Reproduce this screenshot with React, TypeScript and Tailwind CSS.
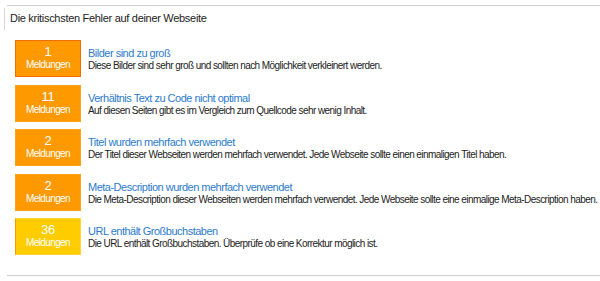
import React from 'react';

type Issue = {
  count: number;
  title: string;
  text: string;
  tone: 'hot' | 'orange' | 'yellow';
};

const issues: Issue[] = [
  { count: 1, title: 'Bilder sind zu groß', text: 'Diese Bilder sind sehr groß und sollten nach Möglichkeit verkleinert werden.', tone: 'hot' },
  { count: 11, title: 'Verhältnis Text zu Code nicht optimal', text: 'Auf diesen Seiten gibt es im Vergleich zum Quellcode sehr wenig Inhalt.', tone: 'orange' },
  { count: 2, title: 'Titel wurden mehrfach verwendet', text: 'Der Titel dieser Webseiten werden mehrfach verwendet. Jede Webseite sollte einen einmaligen Titel haben.', tone: 'orange' },
  { count: 2, title: 'Meta-Description wurden mehrfach verwendet', text: 'Die Meta-Description dieser Webseiten werden mehrfach verwendet. Jede Webseite sollte eine einmalige Meta-Description haben.', tone: 'orange' },
  { count: 36, title: 'URL enthält Großbuchstaben', text: 'Die URL enthält Großbuchstaben. Überprüfe ob eine Korrektur möglich ist.', tone: 'yellow' },
];

const toneClass = {
  hot: 'bg-[#ff9900] border border-[#f26c00]',
  orange: 'bg-[#ff9900] border border-[#ffa31a]',
  yellow: 'bg-[#ffcc00] border border-[#ffd633] border-l-[#ff9900]',
};

const App = () => {
  return (
    <div className="w-[600px] h-[281px] bg-white pt-[5px] font-['Liberation_Sans',Arial,sans-serif] text-[#333]">
      <div className="ml-[7px] border-t border-[#cfcfcf]" />
      <div className="ml-[4px] mt-[2px] border-l border-[#d6d6d6] pl-[5px] h-[22px] flex items-center pb-[2px] text-[11px] tracking-[-0.3px] leading-none text-[#222]">
        Die kritischsten Fehler auf deiner Webseite
      </div>

      <div className="mt-[10px] ml-[15px] flex flex-col gap-[7.5px]">
        {issues.map((issue) => (
          <div key={issue.title} className="flex items-start">
            <div className={`w-[66px] h-[37px] shrink-0 flex flex-col items-center justify-center pb-[1px] text-white ${toneClass[issue.tone]}`}>
              <span className="text-[13px] leading-[14px] tracking-[-0.3px]">{issue.count}</span>
              <span className="text-[10px] leading-[12px] tracking-[-0.6px]">Meldungen</span>
            </div>
            <div className="ml-[7px] pt-[7px] whitespace-nowrap">
              <div className="text-[11px] leading-[12px] tracking-[-0.5px] text-[#2b7bcc]">{issue.title}</div>
              <div className="text-[10px] leading-[12px] mt-[1px] tracking-[-0.56px] text-[#222]">{issue.text}</div>
            </div>
          </div>
        ))}
      </div>

      <div className="ml-[7px] mt-[20px] border-t border-[#cfcfcf]" />
    </div>
  );
};

export default App;
